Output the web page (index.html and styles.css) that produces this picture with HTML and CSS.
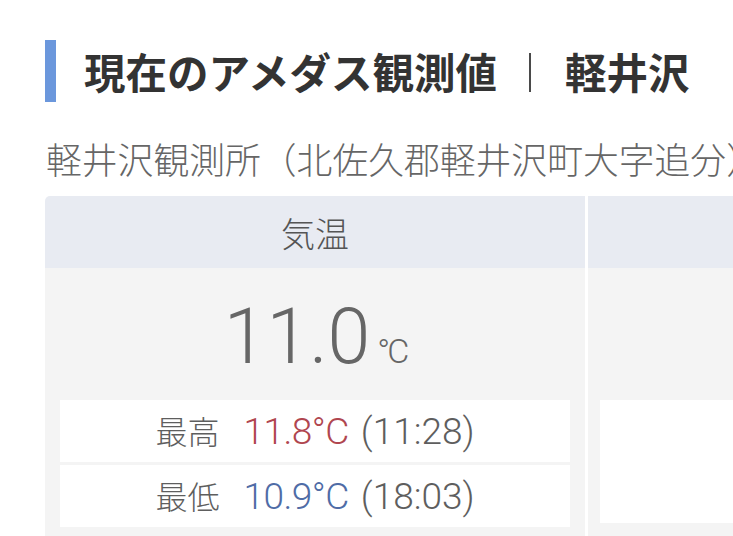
FILE: index.html
```html
<!DOCTYPE html>
<html lang="ja">
<head>
<meta charset="utf-8">
<title>現在のアメダス観測値 | 軽井沢</title>
<link rel="stylesheet" href="styles.css">
</head>
<body>
<main class="page">
  <h1 class="title"><span>現在のアメダス観測値</span><span class="divider"></span><span>軽井沢</span></h1>
  <p class="station">軽井沢観測所（北佐久郡軽井沢町大字追分）</p>
  <section class="card">
    <div class="col">
      <div class="col-head">気温</div>
      <div class="col-body">
        <div class="value"><span class="num">11.0</span><span class="unit">°C</span></div>
        <div class="rows">
          <div class="row"><span class="label">最高</span><span class="temp high">11.8°C</span> <span class="time">(11:28)</span></div>
          <div class="row"><span class="label">最低</span><span class="temp low">10.9°C</span> <span class="time">(18:03)</span></div>
        </div>
      </div>
    </div>
    <div class="col col-2">
      <div class="col-head"></div>
      <div class="col-body">
        <div class="value"></div>
        <div class="empty-box"></div>
      </div>
    </div>
  </section>
</main>
</body>
</html>
```

FILE: styles.css
```css
html, body {
  margin: 0;
  padding: 0;
  background: #ffffff;
}
body {
  width: 733px;
  height: 536px;
  overflow: hidden;
  font-family: "Noto Sans CJK JP", "Noto Sans", sans-serif;
  color: #555555;
}
.page {
  padding: 40px 0 0 45px;
}
.title {
  margin: 0;
  height: 62px;
  line-height: 62px;
  border-left: 11px solid #6b97dc;
  padding-left: 28px;
  font-size: 41.5px;
  font-weight: 700;
  color: #333333;
  white-space: nowrap;
  display: flex;
  align-items: center;
}
.divider {
  display: inline-block;
  width: 2px;
  height: 39px;
  background: #4a4a4a;
  margin: 3px 34px 0 32px;
}
.station {
  margin: 34px 0 0 1px;
  height: 44px;
  line-height: 44px;
  font-size: 35.8px;
  font-weight: 300;
  color: #666666;
  white-space: nowrap;
}
.card {
  margin-top: 16px;
  display: grid;
  grid-template-columns: 540px 540px;
  column-gap: 3px;
  width: 1083px;
}
.col-head {
  height: 72px;
  background: #e8ebf2;
  display: flex;
  align-items: center;
  justify-content: center;
  font-size: 34px;
  font-weight: 300;
  color: #555555;
}
.col:first-child .col-head {
  border-top-left-radius: 5px;
}
.col-body {
  background: #f4f4f4;
  padding: 19px 15px 20px;
}
.col-2 .col-body {
  padding-left: 12px;
}
.value {
  height: 100px;
  line-height: 100px;
  text-align: center;
  font-family: Roboto, "Noto Sans", sans-serif;
  font-weight: 300;
  color: #666666;
  margin-bottom: 13px;
  white-space: nowrap;
}
.num {
  font-size: 77px;
}
.unit {
  font-size: 34px;
  margin-left: 7px;
  letter-spacing: -3px;
}
.rows {
  display: flex;
  flex-direction: column;
  gap: 3px;
}
.row {
  background: #ffffff;
  height: 60px;
  padding-top: 2px;
  line-height: 60px;
  text-align: center;
  font-family: Roboto, "Noto Sans", sans-serif;
  font-weight: 300;
  font-size: 37px;
  color: #5e5e5e;
  white-space: nowrap;
}
.label {
  font-family: "Noto Sans CJK JP", sans-serif;
  font-weight: 300;
  font-size: 32px;
  line-height: 1;
  color: #5e5e5e;
}
.temp {
  margin-left: 24px;
  letter-spacing: -0.5px;
}
.high {
  color: #b0464f;
}
.low {
  color: #4f6ca6;
}
.time {
  margin-left: 3px;
}
.empty-box {
  background: #ffffff;
  height: 123px;
}
```
